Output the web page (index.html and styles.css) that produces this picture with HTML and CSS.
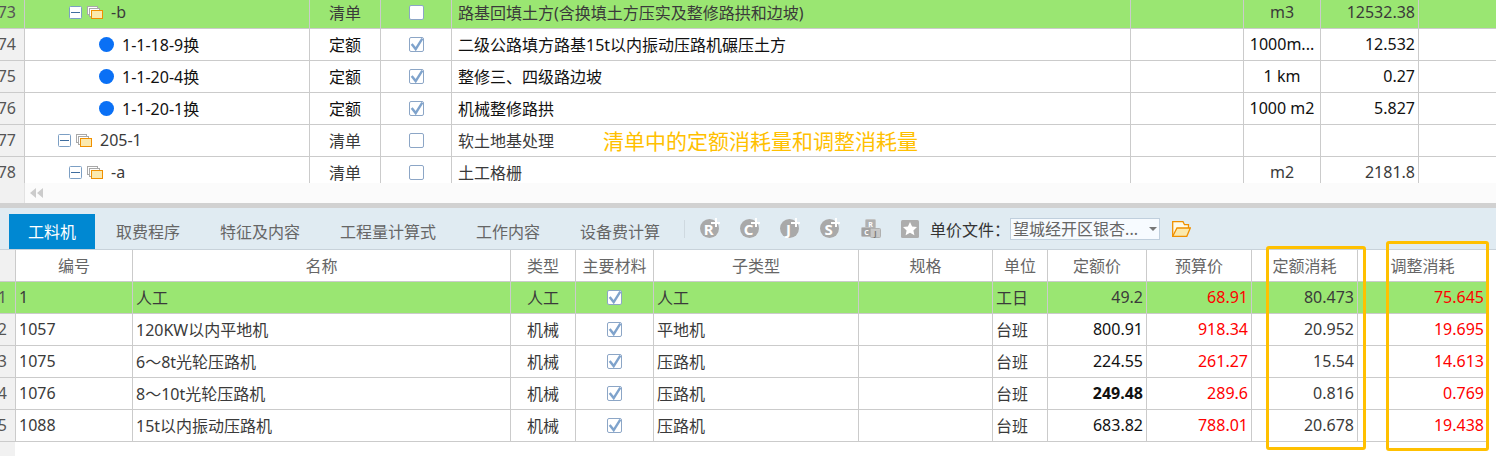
FILE: index.html
```html
<!DOCTYPE html>
<html lang="zh-CN">
<head>
    <meta charset="UTF-8">
    <title>工料机</title>
    <link rel="stylesheet" href="styles.css">
</head>
<body>
    <svg class="defs" width="0" height="0">
        <symbol id="folder" viewBox="0 0 16 13">
            <rect x=".5" y=".5" width="10" height="8" fill="#fff" stroke="#a9a9a9"/>
            <rect x="2.500" y="2.500" width="10" height="8" fill="#fff" stroke="#a9a9a9"/>
            <rect x="4.500" y="4.500" width="11" height="8" fill="#fbe9ae" stroke="#f09000"/>
        </symbol>
        <symbol id="minus" viewBox="0 0 13 13">
            <rect x=".5" y=".5" width="12" height="12" rx="1" fill="#fff" stroke="#7c9fc4"/>
            <path d="M2 6.500h9" stroke="#3f6d9e"/>
        </symbol>
        <symbol id="tick" viewBox="0 0 15 15">
            <rect x=".5" y=".5" width="14" height="14" rx="1.500" fill="#fff" stroke="#8ca6c6"/>
            <path d="M2.700 6.900l4 5.200 6.600-10.400" fill="none" stroke="#7fa3cc" stroke-width="2.400"/>
        </symbol>
        <symbol id="empty" viewBox="0 0 15 15">
            <rect x=".5" y=".5" width="14" height="14" rx="1.500" fill="#fff" stroke="#8ca6c6"/>
        </symbol>
    </svg>

    <section class="upper">
        <div class="upper-rows">
            <div class="row upper-row selected">
                <div class="num">73</div>
                <div class="tree lvl3"><svg class="minus"><use href="#minus"/></svg><svg class="folder"><use href="#folder"/></svg>-b</div>
                <div class="center">清单</div>
                <div class="center"><svg class="check"><use href="#empty"/></svg></div>
                <div class="name">路基回填土方(含换填土方压实及整修路拱和边坡)</div>
                <div></div>
                <div class="center">m3</div>
                <div class="right">12532.38</div>
                <div class="end"></div>
            </div>
            <div class="row upper-row dark">
                <div class="num">74</div>
                <div class="tree lvl4"><span class="dot"></span>1-1-18-9换</div>
                <div class="center">定额</div>
                <div class="center"><svg class="check"><use href="#tick"/></svg></div>
                <div class="name">二级公路填方路基15t以内振动压路机碾压土方</div>
                <div></div>
                <div class="center">1000m...</div>
                <div class="right">12.532</div>
                <div class="end"></div>
            </div>
            <div class="row upper-row dark">
                <div class="num">75</div>
                <div class="tree lvl4"><span class="dot"></span>1-1-20-4换</div>
                <div class="center">定额</div>
                <div class="center"><svg class="check"><use href="#tick"/></svg></div>
                <div class="name">整修三、四级路边坡</div>
                <div></div>
                <div class="center">1 km</div>
                <div class="right">0.27</div>
                <div class="end"></div>
            </div>
            <div class="row upper-row dark">
                <div class="num">76</div>
                <div class="tree lvl4"><span class="dot"></span>1-1-20-1换</div>
                <div class="center">定额</div>
                <div class="center"><svg class="check"><use href="#tick"/></svg></div>
                <div class="name">机械整修路拱</div>
                <div></div>
                <div class="center">1000 m2</div>
                <div class="right">5.827</div>
                <div class="end"></div>
            </div>
            <div class="row upper-row">
                <div class="num">77</div>
                <div class="tree lvl2"><svg class="minus"><use href="#minus"/></svg><svg class="folder"><use href="#folder"/></svg>205-1</div>
                <div class="center">清单</div>
                <div class="center"><svg class="check"><use href="#empty"/></svg></div>
                <div class="name">软土地基处理</div>
                <div></div>
                <div class="center"></div>
                <div class="right"></div>
                <div class="end"></div>
            </div>
            <div class="row upper-row">
                <div class="num">78</div>
                <div class="tree lvl3"><svg class="minus"><use href="#minus"/></svg><svg class="folder"><use href="#folder"/></svg>-a</div>
                <div class="center">清单</div>
                <div class="center"><svg class="check"><use href="#empty"/></svg></div>
                <div class="name">土工格栅</div>
                <div></div>
                <div class="center">m2</div>
                <div class="right">2181.8</div>
                <div class="end"></div>
            </div>
        </div>
        <div class="note">清单中的定额消耗量和调整消耗量</div>
    </section>

    <div class="hscroll">
        <div class="hscroll-corner"></div>
        <svg class="rewind" width="13" height="10" viewBox="0 0 13 10"><path d="M6 0v10L0 5zM13 0v10L7 5z" fill="#ccc"/></svg>
    </div>
    <div class="splitter"></div>

    <nav class="toolbar">
        <a class="tab active">工料机</a>
        <a class="tab first">取费程序</a>
        <a class="tab">特征及内容</a>
        <a class="tab">工程量计算式</a>
        <a class="tab">工作内容</a>
        <a class="tab">设备费计算</a>
        <span class="sep"></span>
        <span class="round">R<i></i></span>
        <span class="round">C<i></i></span>
        <span class="round">J<i></i></span>
        <span class="round">S<i></i></span>
        <svg class="rcj" width="20" height="19" viewBox="0 0 20 19">
            <rect x="4.500" y=".5" width="10" height="9" rx="1" fill="#b0b0b0" stroke="#c4c4c4"/>
            <rect x=".5" y="8.500" width="10" height="9" rx="1" fill="#a2a2a2" stroke="#bdbdbd"/>
            <rect x="9.500" y="9.500" width="10" height="9" rx="1" fill="#c8c8c8" stroke="#b0b0b0"/>
            <text x="9.500" y="7.500" class="key">R</text>
            <text x="5.500" y="15.500" class="key">C</text>
            <text x="14.500" y="16.500" class="key dim">J</text>
        </svg>
        <svg class="star" width="18" height="18" viewBox="0 0 18 18">
            <rect width="18" height="18" rx="1.500" fill="#adadad"/>
            <path d="M9 2l2.100 4.500 4.900.6-3.600 3.300 1 4.800L9 12.800l-4.400 2.400 1-4.800L2 7.100l4.900-.6z" fill="#fff"/>
        </svg>
        <label class="file-label">单价文件<span class="colon">：</span></label>
        <div class="select">望城经开区银杏...<span class="caret"></span></div>
        <svg class="open" width="19" height="16" viewBox="0 0 19 16">
            <path d="M.7 15.300V.7H11l1.500 3H16.500V7" fill="#fffbe9" stroke="#f09000" stroke-width="1.300"/>
            <path d="M.7 15.300L5 7h13.300l-3.500 8.300z" fill="#fbe9ae" stroke="#f09000" stroke-width="1.300"/>
        </svg>
    </nav>

    <section class="lower">
        <div class="row lower-row head">
            <div class="num"></div>
            <div class="center">编号</div>
            <div class="center">名称</div>
            <div class="center">类型</div>
            <div class="center">主要材料</div>
            <div class="center">子类型</div>
            <div class="center">规格</div>
            <div class="center">单位</div>
            <div class="center">定额价</div>
            <div class="center">预算价</div>
            <div class="center">定额消耗</div>
            <div class="center">调整消耗</div>
        </div>
        <div class="row lower-row selected">
            <div class="num">1</div>
            <div>1</div>
            <div>人工</div>
            <div class="center">人工</div>
            <div class="center"><svg class="check"><use href="#tick"/></svg></div>
            <div>人工</div>
            <div></div>
            <div>工日</div>
            <div class="right">49.2</div>
            <div class="right red">68.91</div>
            <div class="right">80.473</div>
            <div class="right red">75.645</div>
        </div>
        <div class="row lower-row">
            <div class="num">2</div>
            <div>1057</div>
            <div>120KW以内平地机</div>
            <div class="center">机械</div>
            <div class="center"><svg class="check"><use href="#tick"/></svg></div>
            <div>平地机</div>
            <div></div>
            <div>台班</div>
            <div class="right black">800.91</div>
            <div class="right red">918.34</div>
            <div class="right">20.952</div>
            <div class="right red">19.695</div>
        </div>
        <div class="row lower-row">
            <div class="num">3</div>
            <div>1075</div>
            <div>6～8t光轮压路机</div>
            <div class="center">机械</div>
            <div class="center"><svg class="check"><use href="#tick"/></svg></div>
            <div>压路机</div>
            <div></div>
            <div>台班</div>
            <div class="right black">224.55</div>
            <div class="right red">261.27</div>
            <div class="right">15.54</div>
            <div class="right red">14.613</div>
        </div>
        <div class="row lower-row">
            <div class="num">4</div>
            <div>1076</div>
            <div>8～10t光轮压路机</div>
            <div class="center">机械</div>
            <div class="center"><svg class="check"><use href="#tick"/></svg></div>
            <div>压路机</div>
            <div></div>
            <div>台班</div>
            <div class="right black bold">249.48</div>
            <div class="right red">289.6</div>
            <div class="right">0.816</div>
            <div class="right red">0.769</div>
        </div>
        <div class="row lower-row">
            <div class="num">5</div>
            <div>1088</div>
            <div>15t以内振动压路机</div>
            <div class="center">机械</div>
            <div class="center"><svg class="check"><use href="#tick"/></svg></div>
            <div>压路机</div>
            <div></div>
            <div>台班</div>
            <div class="right black">683.82</div>
            <div class="right red">788.01</div>
            <div class="right">20.678</div>
            <div class="right red">19.438</div>
        </div>
        <div class="lower-foot"></div>
        <div class="mark mark-a"></div>
        <div class="mark mark-b"></div>
    </section>
</body>
</html>
```

FILE: styles.css
```css
html, body {
    margin: 0;
    padding: 0;
}
body {
    width: 1496px;
    height: 456px;
    overflow: hidden;
    background-color: #fff;
    font-family: "Noto Sans", "Noto Sans CJK SC", sans-serif;
    font-size: 16px;
    color: #3a3a3a;
}
.defs {
    position: absolute;
}

.upper {
    position: relative;
    height: 183px;
    overflow: hidden;
}
.upper-rows {
    margin-top: -3px;
}
.row {
    display: grid;
    height: 32px;
    box-sizing: border-box;
    border-bottom: 1px solid #cbcbcb;
}
.upper-row {
    grid-template-columns: 25px 285px 71px 71px 679px 113px 77px 98px 1fr;
}
.lower-row {
    grid-template-columns: 16px 117px 378px 65px 78px 205px 134px 55px 99px 105px 106px 130px;
    width: 1488px;
}
.row > div {
    display: flex;
    align-items: center;
    box-sizing: border-box;
    padding: 0 3px 2px;
    border-right: 1px solid #cbcbcb;
    white-space: nowrap;
    overflow: hidden;
}
.row > div.end {
    border-right: none;
}
.row > .center {
    justify-content: center;
    padding: 0 0 2px;
}
.row > .right {
    justify-content: flex-end;
}
.row > .name {
    padding-left: 6px;
}
.row > .num {
    justify-content: flex-end;
    padding: 0 8px 2px 0;
    background-color: #f1f1f1;
    color: #555;
}
.selected {
    background-color: #9ae672;
}
.row.selected > .num {
    background-color: #9ae672;
}
.dark {
    color: #111;
}
.row > .lvl2 {
    padding-left: 33px;
}
.row > .lvl3 {
    padding-left: 44px;
}
.row > .lvl4 {
    padding-left: 74px;
}
.minus {
    width: 13px;
    height: 13px;
    margin: 2px 5px 0 0;
    flex: none;
}
.folder {
    width: 16px;
    height: 13px;
    margin: 2px 8px 0 0;
    flex: none;
}
.dot {
    width: 15px;
    height: 15px;
    margin: 2px 8px 0 0;
    border-radius: 50%;
    background-color: #0a70f5;
    flex: none;
}
.check {
    width: 15px;
    height: 15px;
    margin-top: 2px;
}
.note {
    position: absolute;
    left: 603px;
    top: 127px;
    font-size: 21px;
    line-height: 28px;
    color: #ffc000;
}

.hscroll {
    display: flex;
    align-items: center;
    height: 20px;
    background-color: #fbfbfb;
}
.hscroll-corner {
    width: 24px;
    height: 100%;
    border-right: 1px solid #e2e2e2;
    background-color: #f1f1f1;
}
.rewind {
    margin-left: 5px;
}
.splitter {
    height: 5px;
    background-color: #d1d1d1;
}

.toolbar {
    display: flex;
    align-items: flex-end;
    height: 42px;
    box-sizing: border-box;
    padding-left: 9px;
    background-color: #e0ebf2;
    border-bottom: 1px solid #c8d2da;
    color: #666;
}
.tab {
    display: flex;
    align-items: center;
    justify-content: center;
    height: 35px;
    box-sizing: border-box;
    padding-bottom: 2px;
    margin-left: 40px;
}
.tab.active {
    width: 86px;
    margin-left: 0;
    background-color: #0088d2;
    color: #fff;
}
.tab.first {
    margin-left: 21px;
}
.sep {
    align-self: center;
    width: 1px;
    height: 18px;
    margin: 0 15px 0 24px;
    background-color: #cfd9e0;
}
.round {
    position: relative;
    align-self: center;
    width: 19px;
    height: 19px;
    margin-right: 21px;
    border-radius: 50%;
    background-color: #a9a9a9;
    color: #fff;
    font-size: 15px;
    font-weight: 700;
    line-height: 21px;
    text-align: center;
    text-indent: -2px;
}
.round i {
    position: absolute;
    right: -1px;
    top: -1px;
    width: 9px;
    height: 9px;
    background:
        linear-gradient(#fff, #fff) center / 9px 2px no-repeat,
        linear-gradient(#fff, #fff) center / 2px 9px no-repeat;
}
.rcj, .star, .open, .file-label, .select {
    align-self: center;
}
.rcj {
    margin: 0 20px 0 1px;
}
.key {
    font-size: 7px;
    font-weight: 700;
    fill: #fff;
    text-anchor: middle;
}
.key.dim {
    fill: #777;
}
.star {
    margin-right: 11px;
}
.file-label {
    color: #333;
}
.colon {
    font-family: "Noto Sans CJK TC", sans-serif;
}
.select {
    position: relative;
    width: 150px;
    height: 22px;
    box-sizing: border-box;
    padding-left: 2px;
    border: 1px solid #c0cfdd;
    background-color: #f7fbff;
    line-height: 20px;
    color: #666;
}
.caret {
    position: absolute;
    right: 2px;
    top: 8px;
    border: 4px solid transparent;
    border-top: 4px solid #777;
}
.open {
    margin-left: 12px;
}

.lower {
    position: relative;
}
.head {
    color: #666;
}
.lower-foot {
    width: 15px;
    height: 15px;
    background-color: #f1f1f1;
}
.red {
    color: #f00;
}
.black {
    color: #111;
}
.bold {
    font-weight: 700;
}
.mark {
    position: absolute;
    box-sizing: border-box;
    border: 3px solid #ffc000;
    border-radius: 3px;
}
.mark-a {
    left: 1266px;
    top: -4px;
    width: 100px;
    height: 204px;
}
.mark-b {
    left: 1386px;
    top: -9px;
    width: 103px;
    height: 210px;
}
```
